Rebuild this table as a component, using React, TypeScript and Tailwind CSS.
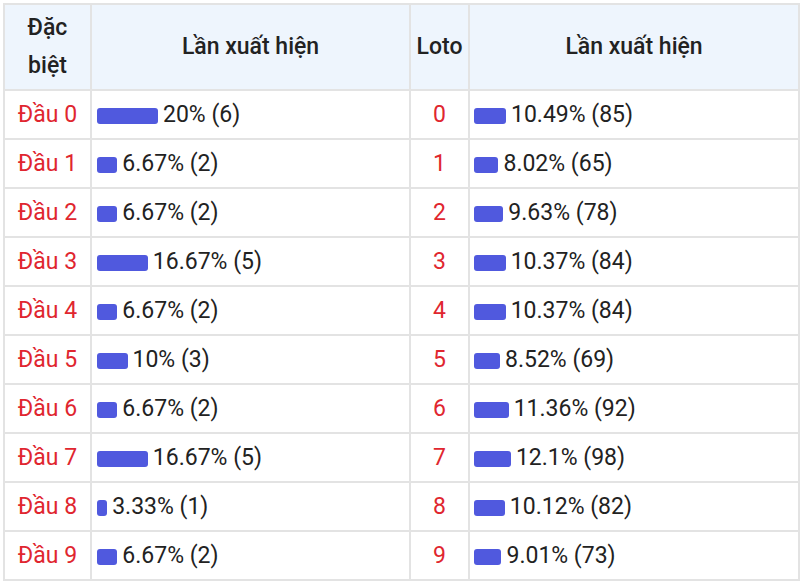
const dacBiet = [
  { pct: '20%', n: 6, v: 20 },
  { pct: '6.67%', n: 2, v: 6.67 },
  { pct: '6.67%', n: 2, v: 6.67 },
  { pct: '16.67%', n: 5, v: 16.67 },
  { pct: '6.67%', n: 2, v: 6.67 },
  { pct: '10%', n: 3, v: 10 },
  { pct: '6.67%', n: 2, v: 6.67 },
  { pct: '16.67%', n: 5, v: 16.67 },
  { pct: '3.33%', n: 1, v: 3.33 },
  { pct: '6.67%', n: 2, v: 6.67 },
]

const loto = [
  { pct: '10.49%', n: 85, v: 10.49 },
  { pct: '8.02%', n: 65, v: 8.02 },
  { pct: '9.63%', n: 78, v: 9.63 },
  { pct: '10.37%', n: 84, v: 10.37 },
  { pct: '10.37%', n: 84, v: 10.37 },
  { pct: '8.52%', n: 69, v: 8.52 },
  { pct: '11.36%', n: 92, v: 11.36 },
  { pct: '12.1%', n: 98, v: 12.1 },
  { pct: '10.12%', n: 82, v: 10.12 },
  { pct: '9.01%', n: 73, v: 9.01 },
]

function Bar({ v, label }: { v: number; label: string }) {
  return (
    <div className="flex items-center gap-[5px]">
      <span className="h-[16px] rounded-[3px] bg-[#5059de] inline-block" style={{ width: `${v * 3.05}px` }} />
      <span>{label}</span>
    </div>
  )
}

export default function App() {
  return (
    <div className="p-[3px] pb-[4px] bg-white" style={{ fontFamily: 'Roboto, "Noto Sans", sans-serif' }}>
      <table className="w-[795px] table-fixed border-collapse border-2 border-[#e3e3e3] text-[23px] text-[#222]">
        <colgroup>
          <col className="w-[87px]" />
          <col className="w-[319px]" />
          <col className="w-[59px]" />
          <col className="w-[330px]" />
        </colgroup>
        <thead>
          <tr className="h-[86px] bg-[#eef5fd] leading-[38px]">
            <th className="border-2 border-[#e3e3e3] font-medium">Đặc<br />biệt</th>
            <th className="border-2 border-[#e3e3e3] font-medium">Lần xuất hiện</th>
            <th className="border-2 border-[#e3e3e3] font-medium">Loto</th>
            <th className="border-2 border-[#e3e3e3] font-medium">Lần xuất hiện</th>
          </tr>
        </thead>
        <tbody>
          {dacBiet.map((d, i) => (
            <tr key={i} className="h-[49px]">
              <td className="border-2 border-[#e3e3e3] pt-[2px] text-center text-[#e0262f]">Đầu {i}</td>
              <td className="border-2 border-[#e3e3e3] pt-[2px] px-[5px]"><Bar v={d.v} label={`${d.pct} (${d.n})`} /></td>
              <td className="border-2 border-[#e3e3e3] pt-[2px] text-center text-[#e0262f]">{i}</td>
              <td className="border-2 border-[#e3e3e3] pt-[2px] pl-[4px] pr-[5px]"><Bar v={loto[i].v} label={`${loto[i].pct} (${loto[i].n})`} /></td>
            </tr>
          ))}
        </tbody>
      </table>
    </div>
  )
}
